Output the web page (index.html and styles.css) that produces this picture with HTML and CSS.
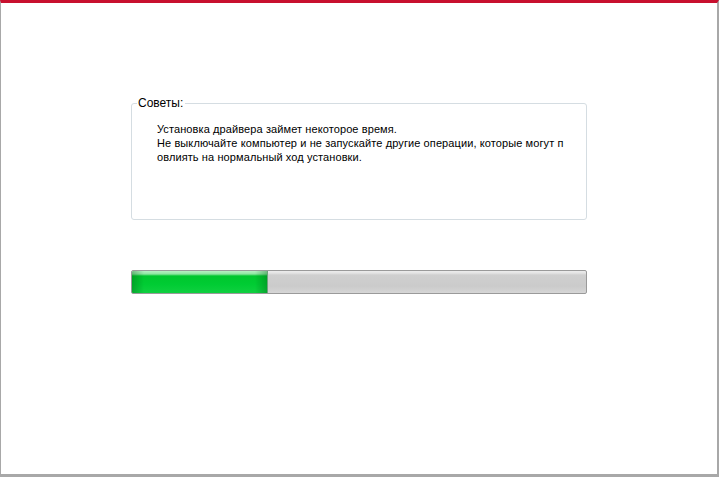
FILE: index.html
```html
<!DOCTYPE html>
<html lang="ru">
<head>
<meta charset="utf-8">
<link rel="stylesheet" href="styles.css">
</head>
<body>
<div class="window">
  <div class="content">
    <fieldset class="tips">
      <legend>Советы:</legend>
      <p>Установка драйвера займет некоторое время.<br>Не выключайте компьютер и не запускайте другие операции, которые могут п<br>овлиять на нормальный ход установки.</p>
    </fieldset>
    <div class="progress"><div class="bar" style="width:30%"></div></div>
  </div>
</div>
</body>
</html>
```
FILE: styles.css
```css
html, body { margin: 0; padding: 0; background: #fff; }
.window {
  box-sizing: border-box;
  width: 719px;
  height: 477px;
  border-top: 3px solid #c8102e;
  border-left: 1px solid #a8a8a8;
  border-right: 2px solid #a8a8a8;
  border-bottom: 3px solid #a8a8a8;
  font-family: "Liberation Sans", Arial, sans-serif;
  font-size: 11px;
  color: #000;
}
.content {
  padding: 93px 0 0 130px;
}
.tips {
  box-sizing: border-box;
  width: 456px;
  min-width: 0;
  height: 124px;
  margin: 0;
  padding: 0 0 0 24px;
  border: 1px solid #d5dde2;
  border-radius: 3px;
}
.tips legend {
  padding: 0 2px 0 1px;
  margin-left: -19px;
  font-size: 12px;
  line-height: 14px;
}
.tips p {
  margin: 12px 0 0 1px;
  line-height: 14px;
  white-space: nowrap;
  letter-spacing: 0.1px;
}
.progress {
  box-sizing: border-box;
  width: 456px;
  height: 24px;
  margin-top: 50px;
  border: 1px solid #9a9a9a;
  border-radius: 2px;
  background: linear-gradient(#ececec 0, #e4e4e4 2px, #cfcfcf 4px, #cbcbcb 70%, #d6d6d6 100%);
  overflow: hidden;
}
.bar {
  height: 100%;
  background:
    linear-gradient(90deg, rgba(0,90,20,0.35) 0, rgba(0,90,20,0) 12px, rgba(0,90,20,0) calc(100% - 12px), rgba(0,90,20,0.35) 100%),
    linear-gradient(#b8f0c4 0, #8ee6a2 3px, #00c62e 5px, #00cc33 60%, #10d040 100%);
  border-right: 1px solid #6fa07c;
  box-sizing: border-box;
}
```
